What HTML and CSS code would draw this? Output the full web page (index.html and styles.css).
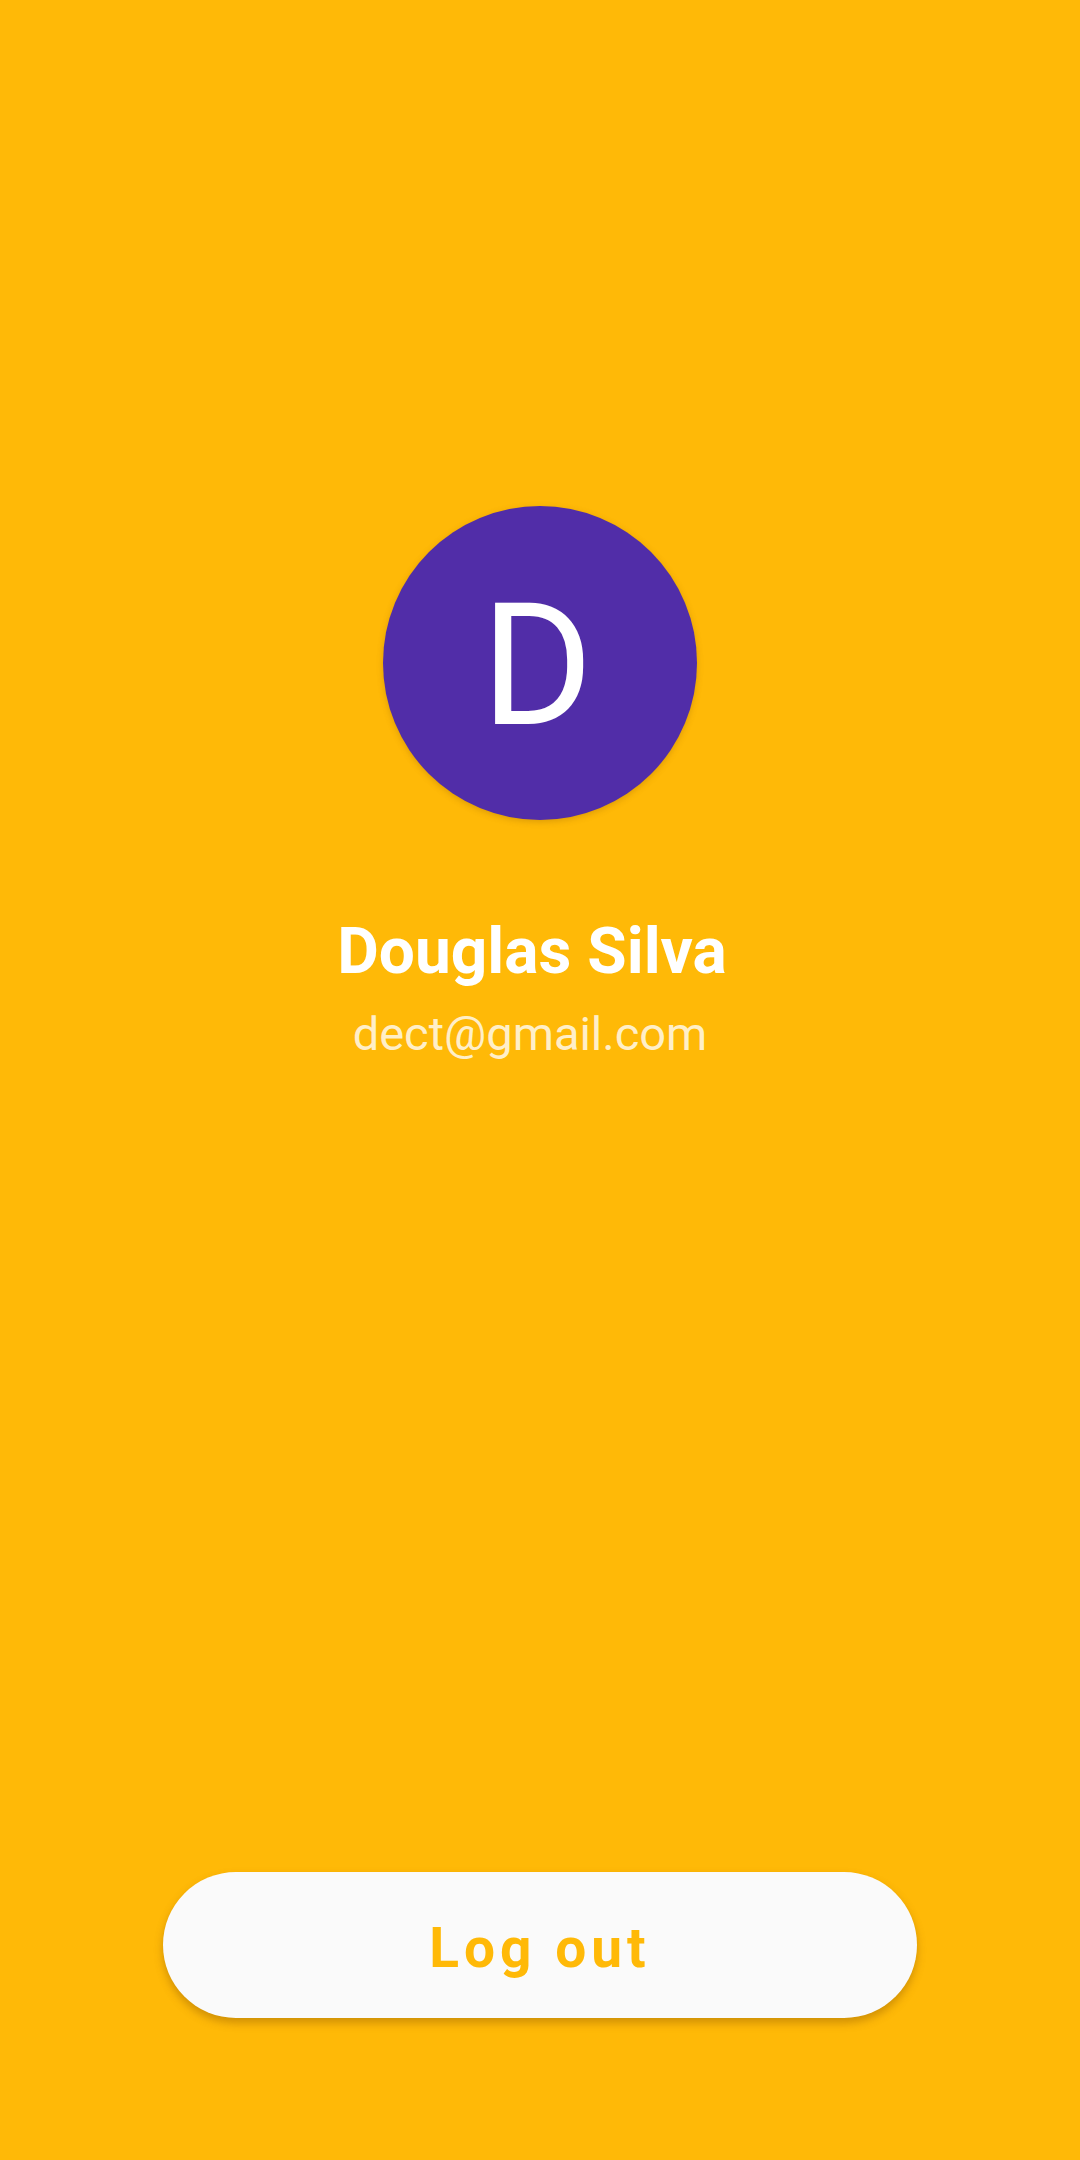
FILE: index.html
```html
<!DOCTYPE html>
<html>
<head>
<meta charset="utf-8">
<link rel="stylesheet" href="styles.css">
</head>
<body>
<main class="screen">
  <div class="avatar"><span class="initial">D</span></div>
  <h1 class="name">Douglas Silva</h1>
  <p class="email">dect@gmail.com</p>
  <button class="logout">Log out</button>
</main>
</body>
</html>
```
FILE: styles.css
```css
html, body {
  margin: 0;
  padding: 0;
  background: #FFB907;
}
.screen {
  width: 1080px;
  height: 2160px;
  display: flex;
  flex-direction: column;
  align-items: center;
  font-family: Roboto, "Liberation Sans", sans-serif;
  box-sizing: border-box;
}
.avatar {
  margin-top: 506px;
  width: 314px;
  height: 314px;
  border-radius: 50%;
  background: #512DA8;
  display: flex;
  align-items: center;
  justify-content: center;
  box-shadow: 0 2px 6px rgba(120, 70, 0, 0.25);
}
.initial {
  color: #ffffff;
  font-size: 171px;
  font-weight: 400;
  line-height: 1;
  margin-left: -6px;
  margin-top: 4px;
}
.name {
  margin: 94px 0 0 -16px;
  color: #ffffff;
  font-size: 64px;
  font-weight: 700;
  line-height: 75px;
}
.email {
  margin: 17px 0 0 -20px;
  color: rgba(255, 255, 255, 0.78);
  font-size: 47px;
  font-weight: 400;
  line-height: 55px;
}
.logout {
  margin-top: auto;
  margin-bottom: 142px;
  width: 754px;
  height: 146px;
  border: none;
  border-radius: 73px;
  background: #FAFAFA;
  color: #FFB907;
  font-family: Roboto, "Liberation Sans", sans-serif;
  font-size: 55px;
  font-weight: 700;
  letter-spacing: 5px;
  box-shadow: 0 5px 8px rgba(120, 70, 0, 0.35);
  padding: 6px 0 0;
}
```
